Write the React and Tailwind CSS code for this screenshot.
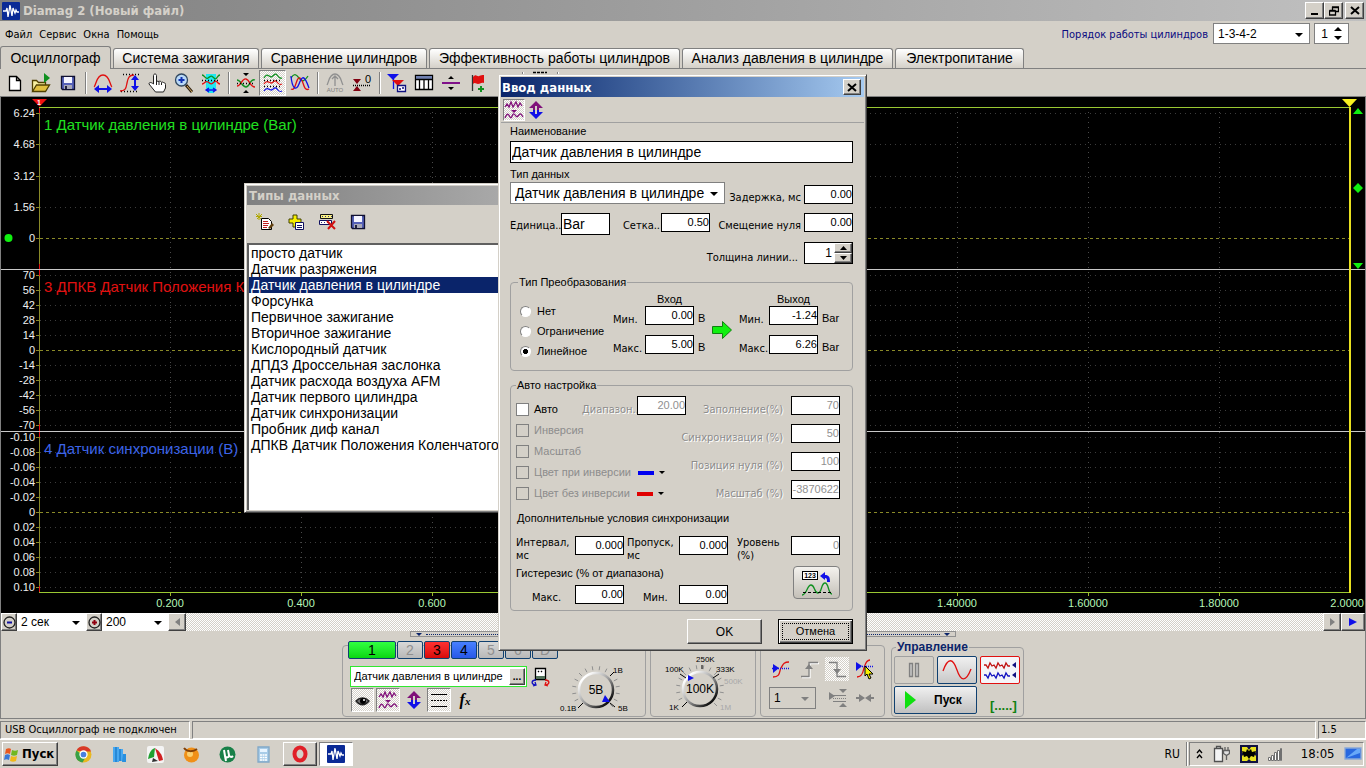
import React, { useState } from "react";

const TABS = [
  { name: "Осциллограф", cls: "w-[111px]" },
  { name: "Система зажигания", cls: "w-[146px]" },
  { name: "Сравнение цилиндров", cls: "w-[166px]" },
  { name: "Эффективность работы цилиндров", cls: "w-[251px]" },
  { name: "Анализ давления в цилиндре", cls: "w-[211px]" },
  { name: "Электропитание", cls: "w-[129px]" },
];

const SENSORS = [
  "просто датчик",
  "Датчик разряжения",
  "Датчик давления в цилиндре",
  "Форсунка",
  "Первичное зажигание",
  "Вторичное зажигание",
  "Кислородный датчик",
  "ДПДЗ Дроссельная заслонка",
  "Датчик расхода воздуха AFM",
  "Датчик первого цилиндра",
  "Датчик синхронизации",
  "Пробник диф канал",
  "ДПКВ Датчик Положения Коленчатого",
];

// y positions and labels of the three channels
const BANDS = [
  { top: 113, step: 31.25, labels: ["6.24", "4.68", "3.12", "1.56", "0"] },
  { top: 275, step: 15, labels: ["70", "56", "42", "28", "14", "0", "-14", "-28", "-42", "-56", "-70"] },
  { top: 437, step: 15, labels: ["-0.10", "-0.08", "-0.06", "-0.04", "-0.02", "0", "0.02", "0.04", "0.06", "0.08", "0.10"] },
];

const TIMES = ["0.200", "0.400", "0.600", "0.800", "1.00000", "1.20000", "1.40000", "1.60000", "1.80000"];

const sans = "font-['Liberation_Sans',Arial,sans-serif]";
const tahoma = "font-['DejaVu_Sans_Condensed','DejaVu_Sans',sans-serif]";
const raised = "border border-t-white border-l-white border-r-[#404040] border-b-[#404040] bg-[#d4d0c8] shadow-[inset_-1px_-1px_0_#808080]";
const sunken = "border border-t-[#808080] border-l-[#808080] border-r-white border-b-white";
const dither = "bg-[conic-gradient(#fff_25%,#d4d0c8_0_50%,#fff_0_75%,#d4d0c8_0)] bg-[length:2px_2px]";

function Svg({ w = 24, h = 24, children, label }) {
  return (
    <svg width={w} height={h} viewBox={`0 0 ${w} ${h}`} fill="none" strokeWidth="1.3" className="shrink-0" role="img" aria-label={label}>
      {children}
    </svg>
  );
}

function Chart() {
  const timeX = (i) => 170 + Math.round(i * 131.1);
  const rowY = (b, i) => b.top + Math.round(i * b.step);
  return (
    <svg viewBox="0 97 1366 516" className="block w-full bg-black" fontFamily="Liberation Sans, Arial, sans-serif" fontSize="11">
      <g shapeRendering="crispEdges">
        {TIMES.map((t, i) => (
          <g key={t}>
            <path d={`M${timeX(i) + 0.5} 112V592`} stroke="#4a4a4a" strokeDasharray="1 4" />
            <path d={`M${timeX(i) + 0.5} 592v4`} stroke="#9ab82a" />
          </g>
        ))}
        {BANDS.map((b) =>
          b.labels.map((l, i) => (
            <g key={l}>
              <path d={`M40 ${rowY(b, i) + 0.5}H1349`} stroke={l === "0" ? "#8a8a28" : "#3c3c3c"} strokeDasharray={l === "0" ? "3 3" : "1 4"} />
              <path d={`M36 ${rowY(b, i) + 0.5}h4`} stroke="#8a8a28" />
            </g>
          ))
        )}
        <path d="M39.5 107V592" stroke="#8a8a28" />
        <path d="M39.5 107v6M39.5 264v12M39.5 424v13M39.5 586v7" stroke="#e01010" />
        <path d="M39 107.5H1350M39 592.5H1350" stroke="#9ac832" />
        <path d="M0 269.5H1366M0 431.5H1366" stroke="#c8c8c8" />
        <path d="M1350 107V593" stroke="#e8e020" strokeWidth="2" />
        <path d="M0.5 97V613M1365.5 97V613" stroke="#808080" />
      </g>
      {BANDS.map((b) =>
        b.labels.map((l, i) => (
          <text key={l} x="35" y={rowY(b, i) + 4} fill="#f0f0f0" textAnchor="end">{l}</text>
        ))
      )}
      {TIMES.map((t, i) => (
        <text key={t} x={timeX(i)} y="607" fill="#b8f8b8" textAnchor="middle">{t}</text>
      ))}
      <text x="1364" y="607" fill="#b8f8b8" textAnchor="end">2.0000</text>
      <g fontSize="15">
        <text x="44" y="130" fill="#20e020">1 Датчик давления в цилиндре (Bar)</text>
        <text x="44" y="292" fill="#e01010">3 ДПКВ Датчик Положения К</text>
        <text x="44" y="454" fill="#3c64e8">4 Датчик синхронизации (В)</text>
      </g>
      <path d="M32 99h15l-7.500 7.500z" fill="#f01010" />
      <text x="39" y="105" fontSize="7" fontWeight="bold" fill="#fff" textAnchor="middle">1</text>
      <path d="M1342 99h15l-7.500 8z" fill="#f8f020" />
      <path d="M1353 114h10l-5-6zM1353 188l5-5 5 5-5 5zM1353 263h10l-5 6z" fill="#10f010" />
      <circle cx="8.500" cy="238" r="4" fill="#10f010" />
    </svg>
  );
}

function NumInput({ label, value, disabled }) {
  return (
    <input
      aria-label={label}
      defaultValue={value}
      disabled={disabled}
      className={`block h-[19px] w-[49px] shrink-0 border border-black bg-white pb-[2px] text-right text-[11px] leading-4 ${sans} ${disabled ? "text-[#909090]" : "text-black"}`}
    />
  );
}

function ToolButton({ label, active, children }) {
  return (
    <button type="button" aria-label={label} className={"flex h-[26px] w-[27px] items-center justify-center " + (active ? `${sunken} ${dither}` : "")}>
      <Svg>{children}</Svg>
    </button>
  );
}

function Sep() {
  return <div className="mr-[3px] ml-1 h-[22px] w-px shrink-0 bg-[#808080] shadow-[1px_0_0_#fff]" />;
}

function CloseGlyph() {
  return (
    <Svg w={10} h={9}>
      <path d="M1 1l8 7M9 1L1 8" stroke="#000" strokeWidth="2" />
    </Svg>
  );
}

function AppLogo({ size }) {
  return (
    <svg width={size} height={size} viewBox="0 0 18 18" fill="none" aria-hidden="true">
      <rect width="18" height="18" rx="1" fill="#0a2a96" />
      <path d="M1 9h3l1-3 1 9 2-12 2 11 1-8 2 5 1-3 1 2h2" stroke="#fff" strokeWidth="1.300" />
    </svg>
  );
}

function UpDownArrow() {
  return (
    <>
      <path d="M12 3l7 7h-4v2h-2V8h-2v4H9v-2H5z" fill="#80107a" />
      <path d="M12 21l7-7h-4v-2h-2v4h-2v-4H9v2H5z" fill="#1010e8" />
    </>
  );
}

function WaveIcon() {
  return (
    <>
      <path d="M3 9l2-3 2 3 2-5 2 5 3-5 2 5 2-4 2 3M3 20c2-5 3-5 5-1 2 3 2-4 4-3s2 4 4 2 2-4 5 1" stroke="#80107a" />
      <path d="M9 12h6l-3 3z" fill="#80107a" />
    </>
  );
}

function FloppyIcon() {
  return (
    <>
      <path d="M5.500 5.500h13v13h-12l-1-1z" fill="#5560b8" stroke="#101030" />
      <path d="M8 6h8v6H8z" fill="#f4f4ff" />
      <path d="M8 14h8v4H8z" fill="#a8a8b8" />
      <path d="M9 15h2v3H9z" fill="#202040" />
    </>
  );
}

function Toolbar() {
  return (
    <div className="flex h-[28px] items-center border-b border-[#808080]">
      <ToolButton label="Новый">
        <path d="M7.500 5.500h7l4 4v10h-11zM14.500 5.500v4h4" fill="#fff" stroke="#000" />
      </ToolButton>
      <ToolButton label="Открыть">
        <path d="M3.500 20V9.500h4l2 2h7v3" fill="#f8f0a0" stroke="#504000" />
        <path d="M3.500 20.500l4-6.500h13l-4 6.500z" fill="#e0c040" stroke="#504000" />
        <path d="M15 2l6 5-6 5z" fill="#109020" />
      </ToolButton>
      <ToolButton label="Сохранить"><FloppyIcon /></ToolButton>
      <Sep />
      <ToolButton label="Развёртка">
        <path d="M3 16c2-1 2-12 9-12s7 11 9 12" stroke="#e01010" />
        <path d="M5 18h14" stroke="#1010e8" strokeWidth="2" />
        <path d="M3 18l5-4v8zM21 18l-5-4v8z" fill="#1010e8" />
      </ToolButton>
      <ToolButton label="Амплитуда">
        <path d="M5 3.500h16M3 20.500h17" stroke="#000" strokeDasharray="1 2" />
        <path d="M2 20c6 0 6-3 7-8s2-8 7-8" stroke="#e01010" />
        <path d="M17 7v10" stroke="#1010e8" strokeWidth="2" />
        <path d="M17 4l4 5h-8zM17 20l4-5h-8z" fill="#1010e8" />
      </ToolButton>
      <ToolButton label="Рука">
        <path d="M8.500 13V4.500c0-2 3-2 3 0V10l2.500.5c1-.8 2 0 2.500.8 1-.6 2 0 2.500.7 1-.3 1.500.3 1.500 1.500v3.500l-2 4h-8L4 13c0-2 2-2 4.500 0zM11.500 10v4M14 11v3M16.500 11.500V14" fill="#fff" stroke="#202020" strokeWidth="1" />
      </ToolButton>
      <ToolButton label="Увеличить">
        <path d="M14 14l6 7" stroke="#302010" strokeWidth="3" />
        <path d="M15 15l5 6" stroke="#d8b060" strokeWidth="1" />
        <circle cx="9.500" cy="9" r="6" fill="#b8d8f8" stroke="#304860" />
        <path d="M6.500 9h6M9.500 6v6" stroke="#1030b0" strokeWidth="2" />
      </ToolButton>
      <ToolButton label="По размеру">
        <path d="M7 3h10v14l-2 5H9l-2-5z" fill="#20e8f0" />
        <path d="M3 4c3 0 3 5 6 3s3-3 6 0 3-3 6-3" stroke="#109020" />
        <path d="M3 13c3 0 3-4 6-2s3 3 6 0 3 2 6 2" stroke="#e01010" />
        <path d="M3 9.500h18" stroke="#000" strokeDasharray="1 2" />
        <path d="M8 19h8M10 17l-3 2 3 2M14 17l3 2-3 2" stroke="#1010e8" />
      </ToolButton>
      <Sep />
      <ToolButton label="Совместить нули">
        <path d="M3 9c4 0 5 7 9 7s4-9 9-7" stroke="#109020" />
        <path d="M3 15c4 0 5-8 9-7s4 8 9 8" stroke="#e01010" />
        <path d="M3 12.500h18" stroke="#000" strokeDasharray="1 2" />
        <path d="M9 2h6l-3 3zM9 22h6l-3-3z" fill="#000" />
      </ToolButton>
      <ToolButton label="Раздельно" active>
        <path d="M3 7c3-6 5-1 7-1s4-5 6-2 3 4 5 3" stroke="#109020" />
        <path d="M3 13c3-5 5-1 7-1s4-4 6-1 3 3 5 2" stroke="#e01010" />
        <path d="M3 20c3-5 5-1 7-1s4-4 6-1 3 3 5 2" stroke="#1010e8" />
        <path d="M3 9.500h18M3 15.500h18" stroke="#000" strokeDasharray="1 2" />
      </ToolButton>
      <ToolButton label="Вместе">
        <path d="M3 7c3-5 5-4 8 0s5 4 9-2" stroke="#109020" />
        <path d="M3 18c5 3 5-13 9-11s3 14 9 11" stroke="#e01010" />
        <path d="M3 5c1 12 5 16 8 8s5-10 10 4" stroke="#1010e8" />
      </ToolButton>
      <Sep />
      <ToolButton label="Авто">
        <path d="M4 14c2-3 2-11 8-11s6 8 8 11M12 15V6M9 8l3-3 3 3" stroke="#909090" />
        <text x="12" y="21" fontSize="6" textAnchor="middle" fill="#808080">AUTO</text>
      </ToolButton>
      <ToolButton label="Ноль">
        <path d="M3 8h8l-4 5zM3 20h8l-4-5z" fill="#800010" />
        <path d="M3 14.500h18" stroke="#000" strokeDasharray="1 1" />
        <text x="18" y="12" fontSize="11" textAnchor="middle" fill="#000">0</text>
      </ToolButton>
      <Sep />
      <ToolButton label="Метки">
        <path d="M2 3h12L8 9z" fill="#1010e8" />
        <path d="M8.500 8v10" stroke="#1010e8" />
        <path d="M7 9h12l-6 6z" fill="#e01010" />
        <path d="M12.500 14.500h8v6h-8z" fill="#fff" stroke="#101080" />
        <path d="M14 18h2M17 17h2" stroke="#101080" />
      </ToolButton>
      <ToolButton label="Таблица">
        <path d="M3.500 4.500h17v14h-17z" fill="#fff" stroke="#000" />
        <path d="M4 5h16v3H4z" fill="#7080b0" />
        <path d="M3 8.500h18M7.500 8v10M12 8v10M16.500 8v10" stroke="#000" />
      </ToolButton>
      <ToolButton label="Разделитель">
        <path d="M3 12h18" stroke="#80108a" strokeWidth="2" />
        <path d="M9 8h6l-3-3zM9 16h6l-3 3z" fill="#000" />
      </ToolButton>
      <ToolButton label="Флаг">
        <path d="M6.500 4v16" stroke="#303030" />
        <path d="M7 6c3-4 4 0 6-1s3-1 5-1v8c-3-1-4 1-6 1s-3-2-5 0z" fill="#e01010" />
        <path d="M12 18h6M15 15v6" stroke="#109020" strokeWidth="2" />
      </ToolButton>
      <span className="w-[27px]" />
      <Sep />
      <ToolButton label="Число"><path d="M5 1.500h14" stroke="#000" strokeDasharray="3 1" /></ToolButton>
      <Sep />
    </div>
  );
}

function Combo({ label, value, className, arrowClass }) {
  return (
    <div className={"relative shrink-0 " + className}>
      <select aria-label={label} defaultValue={value} className="block h-full w-full appearance-none bg-transparent pl-1 outline-none">
        <option>{value}</option>
      </select>
      <svg width="8" height="4" className={"pointer-events-none absolute top-1/2 right-[6px] -mt-px " + (arrowClass || "fill-black")} aria-hidden="true">
        <path d="M0 0h8L4 4z" />
      </svg>
    </div>
  );
}

function SensorWindow() {
  const [current, setCurrent] = useState(2);
  return (
    <section className="absolute top-[183px] left-[244px] flex h-[330px] w-[400px] flex-col border border-t-[#d4d0c8] border-l-[#d4d0c8] border-r-[#404040] border-b-[#404040] bg-[#d4d0c8] p-[2px] shadow-[inset_1px_1px_0_#fff,inset_-1px_-1px_0_#808080]">
      <h2 className={tahoma + " h-[19px] shrink-0 bg-linear-to-r from-[#808080] to-[#c0c0c0] pl-[2px] text-[13px] leading-[20px] font-bold text-[#d4d0c8]"}>Типы данных</h2>
      <div className="flex h-[38px] shrink-0 items-center gap-[7px] px-[6px] pb-[4px]">
        <button type="button" aria-label="Изменить">
          <Svg>
            <path d="M8.500 8.500h7l3 3v8h-10z" fill="#fff" stroke="#000" strokeWidth="1" />
            <path d="M10 11.500h5M10 13.500h6M10 15.500h5M10 17.500h4" stroke="#c02020" strokeWidth="1" />
            <path d="M15 18l4-5 2 2-4 4z" fill="#604010" />
            <path d="M3 4l5 5M9 4L4 9M6 3v7M3 6.500h6" stroke="#b0a800" strokeWidth="1" />
          </Svg>
        </button>
        <button type="button" aria-label="Добавить">
          <Svg>
            <path d="M9 5h4v4h4v4h-4v4H9v-4H5V9h4z" fill="#f8f000" stroke="#404000" strokeWidth="1" />
            <path d="M11.500 12.500h8v7h-8z" fill="#fff" stroke="#101060" strokeWidth="1" />
            <path d="M13 15.500h5M13 17.500h5" stroke="#101060" strokeWidth="1" />
          </Svg>
        </button>
        <button type="button" aria-label="Удалить">
          <Svg>
            <path d="M5.500 4.500h12v4h-12z" fill="#f8f080" stroke="#101010" strokeWidth="1" />
            <path d="M4.500 10.500h12v4h-12z" fill="#fff" stroke="#101060" strokeWidth="1" />
            <path d="M7 6.500h10M6 12.500h9" stroke="#303080" strokeWidth="1" strokeDasharray="1 2" />
            <path d="M12 11l8 8M20 11l-7 8" stroke="#d01010" strokeWidth="2" />
          </Svg>
        </button>
        <button type="button" aria-label="Сохранить"><Svg><FloppyIcon /></Svg></button>
      </div>
      <ul role="listbox" className="min-h-0 flex-1 overflow-hidden border-t-2 border-l-2 border-[#606060] bg-white">
        {SENSORS.map((s, i) => (
          <li
            key={s}
            role="option"
            aria-selected={i === current}
            onClick={() => setCurrent(i)}
            className={"h-4 pl-[2px] text-sm leading-4 whitespace-nowrap " + (i === current ? "bg-[#0a246a] text-white" : "text-black")}
          >
            {s}
          </li>
        ))}
      </ul>
    </section>
  );
}

function Check({ label, disabled }) {
  return (
    <label className={"flex items-center gap-[5px] " + (disabled ? "text-[#8c8c8c]" : "")}>
      <input type="checkbox" disabled={disabled} className={"h-[13px] w-[13px] appearance-none border border-[#808080] " + (disabled ? "bg-transparent" : "bg-white")} />
      {label}
    </label>
  );
}

function ColorMark({ className }) {
  return (
    <span className="ml-[7px] flex items-center gap-[5px]">
      <i className={"h-[4px] w-4 " + className} />
      <svg width="6" height="3" aria-hidden="true"><path d="M0 0h6L3 3z" /></svg>
    </span>
  );
}

function RangeRow({ name, input, output }) {
  return (
    <div className="flex h-[19px] items-start">
      <span className={tahoma + " w-8 pt-[7px]"}>{name}</span>
      <NumInput label={"Вход " + name} value={input} />
      <span className="w-[45px] pt-[6px] pl-1">В</span>
      <span className={tahoma + " w-[30px] pt-[7px]"}>{name}</span>
      <NumInput label={"Выход " + name} value={output} />
      <span className="pt-[6px] pl-1">Bar</span>
    </div>
  );
}

function InputDialog() {
  const [mode, setMode] = useState("Линейное");
  const dim = "text-[#8c8c8c] [text-shadow:1px_1px_0_#fff]";
  const right = [
    ["Заполнение(%)", "70"],
    ["Синхронизация (%)", "50"],
    ["Позиция нуля (%)", "100"],
    ["Масштаб (%)", "-3870622"],
  ];
  return (
    <section role="dialog" aria-label="Ввод данных" className="absolute top-[74px] left-[498px] w-[369px] border border-t-[#d4d0c8] border-l-[#d4d0c8] border-r-[#404040] border-b-[#404040] bg-[#d4d0c8] p-[2px] text-[11px] leading-[13px] shadow-[inset_1px_1px_0_#fff,inset_-1px_-1px_0_#808080]">
      <header className="flex h-5 items-center justify-between bg-linear-to-r from-[#0a246a] to-[#a6caf0] pr-[3px]">
        <h2 className={tahoma + " pl-px text-[13px] font-bold text-white"}>Ввод данных</h2>
        <button type="button" aria-label="Закрыть" className={"flex h-4 w-[18px] items-center justify-center " + raised}><CloseGlyph /></button>
      </header>
      <div className="flex h-[26px] items-center border-b border-[#a0a0a0] pl-[2px]">
        <button type="button" aria-label="Сигнал" className={`flex h-[22px] w-[22px] items-center justify-center ${sunken} ${dither}`}>
          <Svg w={20} h={22}><g transform="translate(-2 -1)"><WaveIcon /></g></Svg>
        </button>
        <button type="button" aria-label="Размах" className="flex h-[22px] w-[22px] items-center justify-center"><Svg><UpDownArrow /></Svg></button>
      </div>
      <form className="pr-[11px] pb-1 pl-[9px]" onSubmit={(e) => e.preventDefault()}>
        <label className="block">
          <span className="block h-[18px] pt-[2px]">Наименование</span>
          <input defaultValue="Датчик давления в цилиндре" className="block h-[22px] w-full border border-black bg-white px-px text-sm" />
        </label>
        <div className="h-[19px] pt-[5px]">Тип данных</div>
        <div className="flex items-end">
          <Combo label="Тип данных" value="Датчик давления в цилиндре" className="h-[22px] w-[215px] border border-[#808080] bg-white text-sm" />
          <span className={tahoma + " flex-1 pr-[3px] text-right"}>Задержка, мс</span>
          <NumInput label="Задержка, мс" value="0.00" />
        </div>
        <div className={"mt-[9px] flex items-start " + tahoma}>
          <span className="w-[51px] pt-[6px]">Единица..</span>
          <input aria-label="Единица" defaultValue="Bar" className={"h-[22px] w-[49px] border border-black bg-white px-px text-sm " + sans} />
          <span className="w-[51px] pt-[6px] pr-px text-right">Сетка..</span>
          <NumInput label="Сетка" value="0.50" />
          <span className="flex-1 pt-[6px] pr-[3px] text-right whitespace-nowrap">Смещение нуля</span>
          <NumInput label="Смещение нуля" value="0.00" />
        </div>
        <div className="mt-[7px] flex items-center justify-end">
          <span className={tahoma + " pt-[8px] pr-[6px]"}>Толщина линии...</span>
          <div className="flex h-[22px] w-[49px] border border-black bg-white">
            <input aria-label="Толщина линии" defaultValue="1" className="w-[29px] min-w-0 pr-[2px] text-right text-xs" />
            <div className="flex flex-1 flex-col">
              <button type="button" aria-label="Больше" className={"flex h-[10px] items-center justify-center " + raised}><svg width="7" height="4"><path d="M0 4h7L3.500 0z" /></svg></button>
              <button type="button" aria-label="Меньше" className={"flex h-[10px] items-center justify-center " + raised}><svg width="7" height="4"><path d="M0 0h7L3.500 4z" /></svg></button>
            </div>
          </div>
        </div>

        <fieldset className="mt-[11px] h-[96px] min-w-0 rounded border border-[#a0a0a0]">
          <legend className="ml-[7px] px-px leading-[14px]">Тип Преобразования</legend>
          <div className="flex">
            <div className="w-[102px] shrink-0 pt-3 pl-[9px]">
              {["Нет", "Ограничение", "Линейное"].map((m) => (
                <label key={m} className="flex h-5 items-center gap-[6px]">
                  <input
                    type="radio"
                    name="mode"
                    checked={mode === m}
                    onChange={() => setMode(m)}
                    className="h-[11px] w-[11px] shrink-0 appearance-none rounded-full border border-[#808080] border-r-white border-b-white bg-white checked:bg-[radial-gradient(#000_35%,#fff_45%)]"
                  />
                  {m}
                </label>
              ))}
            </div>
            <div className="relative flex-1 pt-1">
              <div className="flex h-[13px] text-center">
                <span className="ml-8 w-[49px]">Вход</span>
                <span className="ml-[75px] w-[49px]">Выход</span>
              </div>
              <RangeRow name="Мин." input="0.00" output="-1.24" />
              <div className="h-[10px]" />
              <RangeRow name="Макс." input="5.00" output="6.26" />
              <svg width="20" height="20" aria-hidden="true" className="absolute top-[31px] left-[99px]">
                <path d="M.5 6.500h10v-5l9 8.500-9 8.500v-5H.5z" fill="#10f010" stroke="#108010" />
              </svg>
            </div>
          </div>
        </fieldset>

        <fieldset className="mt-[7px] h-[233px] min-w-0 rounded border border-[#a0a0a0] pr-3 pl-[5px]">
          <legend className="px-px leading-[14px]">Авто настройка</legend>
          <div className="flex h-[108px] justify-between pt-1">
            <div className="w-[160px] shrink-0">
              <div className="flex h-[24px] items-start">
                <div className="w-[66px] shrink-0 pt-[7px]"><Check label="Авто" /></div>
                <span className={`w-[55px] shrink-0 pt-[7px] ${tahoma} ${dim}`}>Диапазон..</span>
                <NumInput label="Диапазон" value="20.00" disabled />
              </div>
              <div className="flex h-[21px] items-center"><Check label="Инверсия" disabled /></div>
              <div className="flex h-[21px] items-center"><Check label="Масштаб" disabled /></div>
              <div className="flex h-[21px] items-center"><Check label="Цвет при инверсии" disabled /><ColorMark className="bg-[#0000f0]" /></div>
              <div className="flex h-[21px] items-center"><Check label="Цвет без инверсии" disabled /><ColorMark className="bg-[#e00000]" /></div>
            </div>
            <div className="flex flex-col gap-[9px]">
              {right.map(([l, v]) => (
                <label key={l} className={`flex h-[19px] items-start justify-end gap-2 whitespace-nowrap ${dim}`}>
                  <span className={tahoma + " pt-[7px]"}>{l}</span>
                  <NumInput label={l} value={v} disabled />
                </label>
              ))}
            </div>
          </div>
          <p className="mt-3 h-6 pl-px">Дополнительные условия синхронизации</p>
          <div className={"flex h-[26px] items-start " + tahoma}>
            <span className="w-[59px]">Интервал,<br />мс</span>
            <NumInput label="Интервал" value="0.000" />
            <span className="w-[55px] pl-[3px]">Пропуск,<br />мс</span>
            <NumInput label="Пропуск" value="0.000" />
            <span className="flex-1 pl-[9px]">Уровень<br />(%)</span>
            <NumInput label="Уровень" value="0" disabled />
          </div>
          <div className="flex items-start justify-between pt-1">
            <div>
              <p className="h-[19px] pt-px">Гистерезис (% от диапазона)</p>
              <div className={"flex items-start " + tahoma}>
                <span className="w-[59px] pt-[6px] pl-4">Макс.</span>
                <NumInput label="Гистерезис макс" value="0.00" />
                <span className="w-[55px] pt-[6px] pl-[19px]">Мин.</span>
                <NumInput label="Гистерезис мин" value="0.00" />
              </div>
            </div>
            <button type="button" aria-label="Рассчитать" className="flex h-[33px] w-[47px] items-center justify-center rounded-sm border border-[#808080] bg-linear-to-b from-[#f4f2ee] to-[#c4c0b8]">
              <Svg w={36} h={28}>
                <rect x="3.500" y="2.500" width="15" height="8" fill="#fff" stroke="#000" strokeWidth="1" />
                <text x="11" y="9" fontSize="7" fontWeight="bold" textAnchor="middle" fill="#000">123</text>
                <path d="M21 7l5-4v3c4 0 5 2 5 7h-3c0-3 0-4-2-4v2z" fill="#1010e8" />
                <path d="M3 26c5 0 5-10 9-10s3 8 7 8 3-10 7-10 3 11 7 11" stroke="#109020" />
                <path d="M4 23.500h28" stroke="#000" strokeWidth="1" strokeDasharray="3 2" />
              </Svg>
            </button>
          </div>
        </fieldset>

        <div className="mt-2 flex justify-end gap-4">
          <button type="button" className={"h-[25px] w-[75px] text-xs " + raised}>OK</button>
          <button type="button" className="h-[25px] w-[75px] border border-black bg-[#d4d0c8] p-[3px] shadow-[inset_1px_1px_0_#fff,inset_-1px_-1px_0_#404040,inset_-2px_-2px_0_#808080]">
            <span className="flex h-full items-center justify-center border border-dotted border-black">Отмена</span>
          </button>
        </div>
      </form>
    </section>
  );
}

function Knob({ cx, cy, value }) {
  const ticks = [];
  for (let a = -225; a <= 45; a += 18) ticks.push((a * Math.PI) / 180);
  return (
    <>
      {ticks.map((a) => (
        <path key={a} d={`M${cx + 20 * Math.cos(a)} ${cy + 20 * Math.sin(a)}L${cx + 24 * Math.cos(a)} ${cy + 24 * Math.sin(a)}`} stroke="#909090" />
      ))}
      <defs>
        <linearGradient id={"knob" + value} x1="0" y1="0" x2="1" y2="1">
          <stop offset="0.15" stopColor="#fff" />
          <stop offset="0.5" stopColor="#a0a0a0" />
          <stop offset="0.9" stopColor="#000" />
        </linearGradient>
      </defs>
      <circle cx={cx} cy={cy} r="17" fill="#d4d0c8" stroke={`url(#knob${value})`} strokeWidth="2.500" />
      <text x={cx} y={cy + 4} fontSize="12" textAnchor="middle" fill="#000">{value}</text>
    </>
  );
}

function ChannelPanel() {
  const channels = [
    ["1", "w-[48px] bg-linear-to-b from-[#30ff40] to-[#08d810] text-black"],
    ["2", "w-[26px] bg-linear-to-b from-[#d8d8d8] to-[#b8b8b8] text-[#909090]"],
    ["3", "w-[26px] bg-linear-to-b from-[#ff3030] to-[#d80808] text-black"],
    ["4", "w-[26px] bg-linear-to-b from-[#4880ff] to-[#2858e8] text-black"],
    ["5", "w-[26px] bg-linear-to-b from-[#d8d8d8] to-[#b8b8b8] text-[#909090]"],
    ["6", "w-[26px] bg-linear-to-b from-[#d8d8d8] to-[#b8b8b8] text-[#909090]"],
    ["D", "w-[26px] bg-linear-to-b from-[#d8d8d8] to-[#b8b8b8] text-[#909090]"],
  ];
  return (
    <div className="flex h-[72px] w-[304px] rounded border border-[#a0a0a0] pl-[5px]">
      <div className="-mt-[5px] w-[211px] shrink-0">
        <div className="flex gap-px">
          {channels.map(([n, cls]) => (
            <button key={n} type="button" className={"h-[18px] shrink-0 rounded-xs border border-[#104070] text-sm leading-4 " + cls}>{n}</button>
          ))}
        </div>
        <div className="mt-[7px] ml-[2px] flex items-center gap-1">
          <div className="flex h-[21px] w-[177px] border border-[#30e830] bg-white p-px">
            <input aria-label="Датчик" defaultValue="Датчик давления в цилиндре" className="min-w-0 flex-1 pl-[2px] text-[11px]" />
            <button type="button" aria-label="Выбрать" className={"w-4 text-[10px] leading-[8px] font-bold " + raised}>...</button>
          </div>
          <Svg w={20} h={20}>
            <path d="M4.500 1.500h10v11h-10z" fill="#fff" stroke="#000" />
            <path d="M5 9h9v3H5z" fill="#507058" />
            <path d="M7 5l1-1M10 4l1 1" stroke="#000" />
            <path d="M5 13c-5 0-5 4-1 5M2 19l3-1-1-3" stroke="#1010c0" />
            <path d="M14 13c5 0 5 4 1 5M17 19l-3-1 1-3" stroke="#e01010" />
          </Svg>
        </div>
        <div className="mt-px ml-[3px] flex items-center gap-[2px]">
          <button type="button" aria-label="Показать" className={`${sunken} ${dither}`}>
            <Svg w={21} h={22}>
              <path d="M4 12c4-4 9-4 13 0-4 5-9 5-13 0z" fill="#707070" stroke="#202020" />
              <circle cx="11" cy="12" r="3" fill="#000" />
              <circle cx="12" cy="11" r="1" fill="#fff" />
            </Svg>
          </button>
          <button type="button" aria-label="Сигнал" className={`${sunken} ${dither}`}><Svg w={22} h={22}><g transform="translate(-1 -1)"><WaveIcon /></g></Svg></button>
          <button type="button" aria-label="Размах"><Svg w={23} h={24}><UpDownArrow /></Svg></button>
          <button type="button" aria-label="Линии" className={`${sunken} ${dither}`}>
            <Svg w={22} h={22}>
              <path d="M3 5.500h16M3 17.500h16" stroke="#000" strokeWidth="1" />
              <path d="M3 11.500h16" stroke="#000" strokeWidth="1" strokeDasharray="2 1" />
            </Svg>
          </button>
          <button type="button" className="w-6 font-['Liberation_Serif',serif] text-base leading-5 font-bold italic">f<span className="text-[11px]">x</span></button>
        </div>
      </div>
      <svg width="84" height="60" viewBox="559 656 84 60" className="mt-[10px] shrink-0" fontSize="8" fill="none">
        <Knob cx={596} cy={690} value="5В" />
        <path d="M583 703l-5 5M610 676l4-4M610 703l5 4" stroke="#000" />
        <path d="M605 695l5 7h-8z" fill="#1010e8" />
        <g fill="#000">
          <text x="560" y="711">0.1В</text>
          <text x="613" y="673">1В</text>
          <text x="618" y="711">5В</text>
        </g>
      </svg>
    </div>
  );
}

function SpeedPanel() {
  return (
    <div className="ml-1 h-[72px] w-[106px] rounded border border-[#a0a0a0]">
      <svg width="102" height="68" viewBox="652 647 102 68" fontSize="8" fill="none">
        <Knob cx={701} cy={690} value="100K" />
        <path d="M688 703l-5 5M703 670v-4M687 679l-6-4M714 679l6-4" stroke="#000" />
        <path d="M689 676l6 3-6 3z" fill="#1010e8" />
        <g fill="#000">
          <text x="666" y="673">100K</text>
          <text x="697" y="663">250K</text>
          <text x="717" y="673">333K</text>
          <text x="670" y="711">1K</text>
          <g fill="#a8a8a8">
            <text x="725" y="685">500K</text>
            <text x="721" y="711">1M</text>
          </g>
        </g>
      </svg>
    </div>
  );
}

function SyncPanel() {
  return (
    <div className="ml-1 flex h-[72px] w-[125px] flex-col gap-[5px] rounded border border-[#a0a0a0] pt-[11px] pl-2">
      <div className="flex gap-[4px]">
        <Svg>
          <path d="M4 20c8 0 6-6 8-9s2-6 8-6" stroke="#e01010" />
          <path d="M3 11.500h18" stroke="#1010e8" strokeDasharray="1 1" />
          <path d="M4 7l6 4-6 5z" fill="#1010e8" />
        </Svg>
        <Svg>
          <path d="M5 20.500h8v-14h9" stroke="#fff" />
          <path d="M4 19.500h8v-14h9" stroke="#808080" />
          <path d="M8 12h8l-4-5z" fill="#808080" />
        </Svg>
        <span className={dither}>
          <Svg>
            <path d="M4 5.500h8v14h9" stroke="#808080" />
            <path d="M8 12h8l-4 5z" fill="#808080" />
          </Svg>
        </span>
        <Svg>
          <path d="M4 20c6 0 6-6 7-9s2-8 6-8" stroke="#e01010" />
          <path d="M3 9.500h18" stroke="#1010e8" strokeDasharray="1 1" />
          <path d="M3 5l6 4-6 5z" fill="#1010e8" />
          <path d="M12 9l8 8h-4l2 4-2 1-2-5-2 2z" fill="#f8f000" stroke="#000" strokeWidth="1" />
        </Svg>
      </div>
      <div className="flex items-center">
        <Combo label="Канал синхронизации" value="1" className="h-[22px] w-[47px] border border-[#808080] text-xs" arrowClass="fill-[#808080]" />
        <span className="w-[9px]" />
        <Svg>
          <path d="M4 6l6 4-6 4zM14 3h8l-4 4zM14 21h8l-4-4z" fill="#808080" />
          <path d="M5 9.500h16M8 15.500h13" stroke="#808080" strokeWidth="1" />
          <path d="M8 12.500h13" stroke="#808080" strokeWidth="1" strokeDasharray="1 1" />
        </Svg>
        <span className="w-[4px]" />
        <Svg>
          <path d="M3 12h6M21 12h-6" stroke="#808080" strokeWidth="2" />
          <path d="M6 8l6 4-6 4zM18 8l-6 4 6 4z" fill="#808080" />
        </Svg>
      </div>
    </div>
  );
}

function ControlPanel() {
  return (
    <fieldset className="ml-[6px] -mt-[3px] h-[75px] w-[133px] rounded border border-[#a0a0a0] pl-[2px]">
      <legend className="ml-[2px] px-px text-xs leading-[11px] font-bold text-[#0a246a]">Управление</legend>
      <div className="flex gap-[3px] pt-[3px]">
        <button type="button" aria-label="Пауза" className="flex h-[28px] w-10 items-center justify-center rounded-xs border border-[#a0a0a0]">
          <Svg w={12} h={16}><path d="M1.500 1.500h3v13h-3zM7.500 1.500h3v13h-3z" fill="#c0c0c0" stroke="#808080" /></Svg>
        </button>
        <button type="button" aria-label="Один сигнал" className="flex h-[28px] w-10 items-center justify-center rounded-xs border border-[#104070] bg-linear-to-b from-[#f0f0f0] to-[#c8c8c8]">
          <Svg w={32} h={22}><path d="M2 12C7-2 12-1 16 11s9 12 14-1" stroke="#e01010" /></Svg>
        </button>
        <button type="button" aria-label="Все сигналы" className="flex h-[28px] w-10 items-center justify-center rounded-xs border border-[#e01010] bg-[#f4f4f8]">
          <Svg w={34} h={22}>
            <path d="M1 6h2l2 3 2-5 2 3 2-1 2 3 2-5 2 3 2-1 2 3 2-5 2 3h2" stroke="#c01010" />
            <path d="M1 16h2l2 3 2-5 2 3 2-1 2 3 2-5 2 3 2-1 2 3 2-5 2 3h2" stroke="#1010c0" />
            <path d="M33 3v6l-4-3zM33 13v6l-4-3z" fill="#101080" />
          </Svg>
        </button>
      </div>
      <div className="mt-[2px] flex items-center">
        <button type="button" className="flex h-[28px] w-[83px] items-center gap-[18px] rounded-xs border border-[#104070] bg-linear-to-b from-[#f0f0f0] to-[#c0c0c0] pl-[10px] text-xs font-bold">
          <svg width="11" height="18" aria-hidden="true"><path d="M0 0l11 9-11 9z" fill="#10e010" /></svg>
          Пуск
        </button>
        <span className="mt-3 ml-[13px] text-[13px] leading-4 font-bold text-[#108010]">[.....]</span>
      </div>
    </fieldset>
  );
}

function ScrollRow() {
  return (
    <div className="flex h-[18px] border-x border-[#808080]">
      <button type="button" aria-label="Уменьшить" className={"flex w-4 items-center justify-center " + raised}>
        <Svg w={13} h={13}><circle cx="6.500" cy="6.500" r="5.500" stroke="#202020" /><path d="M4 6.500h5" stroke="#1010a0" strokeWidth="2" /></Svg>
      </button>
      <Combo label="Развёртка" value="2 сек" className="w-[69px] bg-white text-xs" />
      <button type="button" aria-label="Увеличить" className={"flex w-4 items-center justify-center " + raised}>
        <Svg w={13} h={13}><circle cx="6.500" cy="6.500" r="5.500" stroke="#202020" /><path d="M4 6.500h5M6.500 4v5" stroke="#900010" strokeWidth="2" /></Svg>
      </button>
      <Combo label="Масштаб" value="200" className="w-[66px] bg-white text-xs" />
      <button type="button" aria-label="Влево" className={"flex w-[18px] items-center justify-center " + raised}><svg width="5" height="8"><path d="M5 0v8L0 4z" fill="#808080" /></svg></button>
      <div className={"flex-1 " + dither} />
      <button type="button" aria-label="Вправо" className={"flex w-[18px] items-center justify-center " + raised}><svg width="5" height="8"><path d="M0 0v8l5-4z" fill="#808080" /></svg></button>
      <button type="button" aria-label="В конец" className={"flex w-6 items-center justify-center " + raised}><svg width="8" height="8"><path d="M0 0v8l8-4z" fill="#1010e8" /></svg></button>
    </div>
  );
}

function Taskbar() {
  return (
    <footer className={"flex h-[29px] items-center border-t border-white pr-[2px] pl-[2px] " + tahoma}>
      <button type="button" className={"flex h-6 w-14 items-center gap-[2px] pl-px text-[13px] font-bold " + raised}>
        <Svg w={16} h={16}>
          <path d="M2 3c2-1 4-1 5 0L6 8C4 7 3 7 1 8z" fill="#e85820" />
          <path d="M8 4c2 1 4 1 6 0l-1 5c-2 1-4 1-6 0z" fill="#70b820" />
          <path d="M1 9c2-1 3-1 5 0l-1 5c-2-1-3-1-5 0z" fill="#3878d8" />
          <path d="M7 10c2 1 4 1 6 0l-1 5c-2 1-4 1-6 0z" fill="#f0b818" />
        </Svg>
        Пуск
      </button>
      <div className="ml-[17px] flex gap-[19px]">
        <Svg w={17} h={17}>
          <circle cx="8.500" cy="8.500" r="8" fill="#e8b820" />
          <path d="M1.500 4.500a8 8 0 0 1 14.500 1H8.500z" fill="#d83828" />
          <path d="M1.500 4.500a8 8 0 0 0 6 12l3.500-6-4.500-2z" fill="#38a048" />
          <circle cx="8.500" cy="8.500" r="3.500" fill="#4880e0" stroke="#fff" />
        </Svg>
        <Svg w={17} h={17}><path d="M2 1h6v15H2zM8 3h4v12H8z" fill="#48a8f0" /><path d="M5 1v15M9 3v12" stroke="#1878c8" /><path d="M12 8h3v8h-4z" fill="#2890e0" /></Svg>
        <Svg w={17} h={17}><rect width="17" height="17" rx="2" fill="#f4f4f4" /><path d="M1 13C2 8 3 4 8 2l-1 9z" fill="#20a030" /><path d="M8 2c4 3 7 6 8 12l-4 1z" fill="#d02020" /><path d="M6 12l5 3-6 1z" fill="#303030" /></Svg>
        <Svg w={17} h={17}><circle cx="8.500" cy="9" r="7.500" fill="#f09018" /><circle cx="7" cy="8" r="3" fill="#fbd070" /><path d="M1 2c3 4 9 4 13 1" stroke="#804008" strokeWidth="2" /></Svg>
        <Svg w={17} h={17}><circle cx="8.500" cy="8.500" r="8" fill="#188048" /><path d="M5 4l1 6c1 2 4 2 4-1L9 4M10 9c1 3 3 2 4 1M6 10l1 5" stroke="#fff" strokeWidth="2" /></Svg>
        <Svg w={17} h={17}><path d="M3 1h11v15H3z" fill="#a8cce8" stroke="#80a8c8" /><path d="M5 3h7v3H5z" fill="#e8f4ff" /><path d="M5 9h7M5 11.500h7M5 14h7" stroke="#fff" strokeWidth="1.500" strokeDasharray="2 .5" /></Svg>
      </div>
      <button type="button" aria-label="Opera" className={"ml-[11px] flex h-6 w-[34px] items-center justify-center " + raised}>
        <Svg w={18} h={18}><ellipse cx="9" cy="9" rx="5.500" ry="6.500" stroke="#e02028" strokeWidth="4" /></Svg>
      </button>
      <button type="button" aria-label="Diamag 2" className={"ml-[2px] flex h-6 w-[34px] items-center justify-center bg-white " + sunken}><AppLogo size={18} /></button>
      <span className="flex-1" />
      <span className="text-xs">RU</span>
      <i className="mr-[2px] ml-[6px] h-6 w-px bg-[#808080] shadow-[1px_0_0_#fff]" />
      <div className={"flex h-6 w-[175px] items-center justify-between pr-px pl-[5px] " + sunken}>
        <Svg w={9} h={12}><path d="M2 5l2.500-3L7 5M2 10l2.500-3L7 10" stroke="#000" /></Svg>
        <Svg w={17} h={18}><path d="M1.500 3.500h8v13h-8zM3.500 1.500h4v2h-4z" fill="#f4f4f4" stroke="#505050" /><path d="M10.500 5.500h6v3l-3 2-3-2zM13.500 10v5M12 2v3M15 2v3" fill="#e0e0e0" stroke="#606060" /></Svg>
        <Svg w={18} h={18}><path d="M0 0h18v18H0z" fill="#101040" /><path d="M2 2h5l2 3 2-3h5v5l-2 2 2 2v5h-5l-2-2-2 2H2v-5l2-2-2-2z" fill="#e8e020" /><path d="M2 6l4 1 1-3 2 2 2-2 1 3 4-1-2 6-3-1-2 3-2-3-3 1z" fill="#000" /></Svg>
        <Svg w={16} h={16}><path d="M1.500 11.500h2v3h-2zM4.500 9.500h2v5h-2zM7.500 6.500h2v8h-2zM10.500 4.500h2v10h-2zM13.500 2.500h1v12h-1z" fill="#fff" stroke="#707070" strokeWidth="1" /></Svg>
        <time className="pl-2 text-[13px]">18:05</time>
        <Svg w={18} h={15}><path d="M1 1h16v11H1z" fill="#2868e0" stroke="#88a8d8" /><path d="M2 11L13 2h3v4z" fill="#68a8f8" /></Svg>
      </div>
    </footer>
  );
}

export default function App() {
  const [tab, setTab] = useState(0);
  const winBtn = "flex h-[17px] w-[19px] items-center justify-center " + raised;
  return (
    <div className={"relative flex min-h-screen flex-col overflow-hidden bg-[#d4d0c8] text-black " + sans}>
      <header className="flex h-[21px] items-center bg-linear-to-r from-[#808080] to-[#c0c0c0] pr-[2px] pl-[2px]">
        <AppLogo size={18} />
        <h1 className={tahoma + " flex-1 pl-[3px] text-[13px] font-bold text-[#d4d0c8]"}>Diamag 2 (Новый файл)</h1>
        <button type="button" aria-label="Свернуть" className={winBtn}><svg width="8" height="9"><path d="M0 7h7v2H0z" /></svg></button>
        <button type="button" aria-label="Восстановить" className={winBtn + " mr-[2px]"}>
          <Svg w={10} h={10}><path d="M3.500 4V1.500h6v4H7M.5 5h6v4h-6zM3 1h7M.5 4.500h6" stroke="#000" /></Svg>
        </button>
        <button type="button" aria-label="Закрыть" className={winBtn}><CloseGlyph /></button>
      </header>

      <div className={"flex h-[25px] items-center pr-[17px] pl-[5px] text-[11px] " + tahoma}>
        <nav className="flex flex-1 gap-[7px] pt-1">
          <button type="button">Файл</button>
          <button type="button">Сервис</button>
          <button type="button">Окна</button>
          <button type="button">Помощь</button>
        </nav>
        <span className="pt-1 pr-[5px] text-[#0a0a80]">Порядок работы цилиндров</span>
        <Combo label="Порядок работы цилиндров" value="1-3-4-2" className={"h-[21px] w-[97px] border border-[#808080] bg-white text-xs " + sans} />
        <div className="ml-1 flex h-[21px] w-[35px] items-center border border-[#808080] bg-white pr-[6px]">
          <input aria-label="Номер цилиндра" defaultValue="1" className={"min-w-0 flex-1 pr-[6px] text-right text-xs " + sans} />
          <svg width="8" height="13" aria-hidden="true"><path d="M0 4h8L4 0zM0 9h8l-4 4z" /></svg>
        </div>
      </div>

      <div className="flex h-[23px] items-end gap-[2px] border-b border-[#808080]">
        {TABS.map((t, i) => (
          <button
            key={t.name}
            type="button"
            onClick={() => setTab(i)}
            className={
              "shrink-0 rounded-t-[3px] border border-b-0 border-[#808080] text-sm leading-[19px] whitespace-nowrap " +
              t.cls +
              (i === tab ? " -mb-px h-[23px] bg-[#d4d0c8]" : " h-[20px] bg-linear-to-b from-white to-[#d4d0c8]")
            }
          >
            {t.name}
          </button>
        ))}
      </div>

      <Toolbar />
      <Chart />
      <ScrollRow />

      <div className="flex h-[88px] flex-col items-center border-x border-b border-[#808080]">
        <div className="flex h-[6px] w-[546px] items-center justify-between border border-[#909090] px-[5px]">
          <svg width="6" height="3"><path d="M0 0h6L3 3z" fill="#0a246a" /></svg>
          <i className="mx-1 flex-1 border-t border-dotted border-[#0a246a]" />
          <svg width="6" height="3"><path d="M0 0h6L3 3z" fill="#0a246a" /></svg>
        </div>
        <div className="flex pt-2">
          <ChannelPanel />
          <SpeedPanel />
          <SyncPanel />
          <ControlPanel />
        </div>
      </div>

      <div className={"mt-[2px] flex h-[18px] gap-[2px] text-[11px] " + tahoma}>
        <span className={"w-[190px] pl-1 leading-4 " + sunken}>USB Осциллограф не подключен</span>
        <span className={"flex-1 " + sunken} />
        <span className={"w-[48px] pl-[2px] leading-4 " + sunken}>1.5</span>
      </div>
      <Taskbar />

      <SensorWindow />
      <InputDialog />
    </div>
  );
}
